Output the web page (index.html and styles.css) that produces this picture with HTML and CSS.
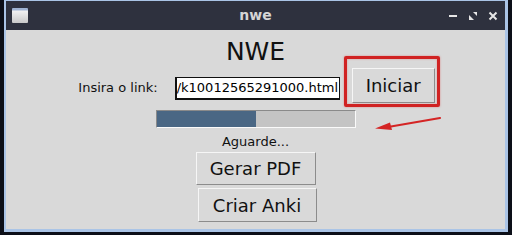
FILE: index.html
```html
<!DOCTYPE html>
<html>
<head>
<meta charset="utf-8">
<link rel="stylesheet" href="styles.css">
</head>
<body>
<div class="window">
  <div class="titlebar">
    <div class="appicon"></div>
    <div class="title">nwe</div>
    <div class="controls">
      <svg class="ctl" width="10" height="10" viewBox="0 0 10 10"><rect x="1" y="4" width="8" height="2" fill="#e6e6e6"/></svg>
      <svg class="ctl" width="10" height="10" viewBox="0 0 10 10"><polygon points="5,1 9,1 9,5" fill="#e6e6e6"/><polygon points="1,4 1,9 6,9" fill="#e6e6e6"/></svg>
      <svg class="ctl" width="10" height="10" viewBox="0 0 10 10"><path d="M1.5 1.5 L8.5 8.5 M8.5 1.5 L1.5 8.5" stroke="#e6e6e6" stroke-width="2"/></svg>
    </div>
  </div>
  <div class="content">
    <div class="heading">NWE</div>
    <div class="linkrow">
      <span class="label">Insira o link:</span>
      <div class="entry"><span class="entrytext">/k10012565291000.html</span><span class="cursor"></span></div>
      <div class="btnwrap">
        <button class="btn btn-start">Iniciar</button>
        <div class="redbox"></div>
      </div>
    </div>
    <div class="progress"><div class="fill" style="width: 50%"></div></div>
    <div class="status">Aguarde...</div>
    <button class="btn btn-pdf">Gerar PDF</button>
    <button class="btn btn-anki">Criar Anki</button>
    <svg class="arrow" width="70" height="16" viewBox="0 0 70 16">
      <path d="M66 2 L14 11" stroke="#d42525" stroke-width="2.2" stroke-linecap="round"/>
      <polygon points="1,12.5 16,6.5 18,14" fill="#d42525"/>
    </svg>
  </div>
</div>
</body>
</html>
```

FILE: styles.css
```css
html, body {
  margin: 0;
  padding: 0;
}
body {
  width: 512px;
  height: 235px;
  background: #0c0f18;
  overflow: hidden;
  font-family: "DejaVu Sans", sans-serif;
}
.window {
  margin-left: 4px;
  width: 499px;
  height: 228px;
  border-top: 1px solid #aac4e6;
  border-left: 2px solid #aac4e6;
  border-right: 3px solid #aac4e6;
  border-bottom: 3px solid #aac4e6;
  display: flex;
  flex-direction: column;
}
.titlebar {
  height: 29px;
  background: #2e313e;
  display: flex;
  align-items: center;
  position: relative;
}
.appicon {
  width: 16px;
  height: 15px;
  margin-left: 6px;
  background: linear-gradient(#9fb3d2 0, #9fb3d2 2px, #f2f2f2 3px, #c9c9c9 100%);
  border-radius: 1px;
}
.title {
  position: absolute;
  left: 0;
  right: 0;
  text-align: center;
  color: #d6d6d6;
  font-weight: bold;
  font-size: 14px;
  top: 6px;
  line-height: 16px;
}
.controls {
  margin-left: auto;
  margin-right: 7px;
  display: flex;
  gap: 10px;
}
.ctl { display: block; }
.content {
  flex: 1;
  background: #d9d9d9;
  display: flex;
  flex-direction: column;
  align-items: center;
  position: relative;
}
.heading {
  margin-top: 8px;
  font-size: 25px;
  line-height: 28px;
  color: #111;
}
.linkrow {
  margin-top: 2px;
  display: flex;
  align-items: flex-start;
  height: 35px;
  margin-left: 2px;
}
.label {
  margin-top: 12px;
  font-size: 13px;
  line-height: 16px;
  color: #111;
}
.entry {
  margin-top: 9px;
  margin-left: 17px;
  width: 162px;
  height: 20px;
  border: 2px solid #111;
  border-top-width: 1px;
  border-right-width: 1px;
  background: #fff;
  display: flex;
  align-items: center;
  overflow: hidden;
  white-space: nowrap;
}
.entrytext {
  font-size: 13px;
  line-height: 16px;
  color: #000;
  margin-left: 0;
}
.cursor {
  width: 2px;
  height: 17px;
  background: #000;
  margin-left: 1px;
}
.btnwrap {
  position: relative;
  margin-left: 12px;
}
.btn {
  font-family: "DejaVu Sans", sans-serif;
  font-size: 18px;
  color: #111;
  background: #d9d9d9;
  border: 1px solid;
  border-color: #f6f6f6 #8c8c8c #8c8c8c #f6f6f6;
  padding: 0;
  margin: 0;
  display: block;
}
.btn-start {
  width: 83px;
  height: 35px;
}
.redbox {
  position: absolute;
  left: -8px;
  top: -12px;
  width: 90px;
  height: 45px;
  border: 3px solid #d02222;
  border-radius: 2px;
  box-shadow: 0 0 2px rgba(230, 40, 40, 0.5), inset 0 0 2px rgba(230, 40, 40, 0.4);
}
.progress {
  margin-top: 7px;
  width: 198px;
  height: 16px;
  background: #c4c4c4;
  border: 1px solid;
  border-color: #8a8a8a #fafafa #fafafa #8a8a8a;
  display: flex;
  margin-left: 1px;
}
.fill {
  height: 100%;
  background: #4a6784;
}
.status {
  margin-top: 6px;
  font-size: 13px;
  line-height: 16px;
  color: #111;
}
.btn-pdf {
  margin-top: 2px;
  width: 120px;
  height: 33px;
}
.btn-anki {
  margin-top: 3px;
  width: 119px;
  height: 34px;
  margin-left: 3px;
}
.arrow {
  position: absolute;
  left: 368px;
  top: 86px;
}
```
